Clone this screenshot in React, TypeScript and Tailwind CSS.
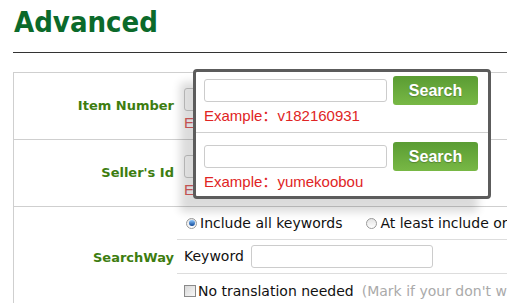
import type { ReactNode } from 'react';

const tahoma = { fontFamily: '"DejaVu Sans", Verdana, sans-serif' };
const arial = { fontFamily: '"Liberation Sans", "Noto Sans CJK SC", Arial, sans-serif' };

const SearchButton = () => (
  <button
    className="h-[29px] w-[85px] shrink-0 rounded-[3px] bg-gradient-to-b from-[#5a9c33] to-[#78b845] text-[16px] font-bold text-white [text-shadow:0_1px_1px_rgba(0,0,0,0.25)]"
    style={arial}
  >
    Search
  </button>
);

const Field = ({ width }: { width: string }) => (
  <div className={`h-[23px] shrink-0 ${width} rounded-[3px] border border-[#cccccc] bg-white`} />
);

const SearchBlock = ({ example, top }: { example: string; top: string }) => (
  <div className={`flex flex-col pl-[8px] ${top}`}>
    <div className="flex items-center gap-[6px]">
      <Field width="w-[183px]" />
      <SearchButton />
    </div>
    <div className="mt-[1px] text-[15px] leading-[20px] text-[#e02424]" style={arial}>
      Example：{example}
    </div>
  </div>
);

const Radio = ({ checked }: { checked?: boolean }) => (
  <span className="mr-[3px] inline-flex h-[11px] w-[11px] shrink-0 items-center justify-center rounded-full border border-[#9a9a9a] bg-gradient-to-b from-[#e4e4e4] to-[#ffffff]">
    {checked && <span className="h-[6px] w-[6px] rounded-full bg-gradient-to-b from-[#8cc8ff] to-[#0a4596]" />}
  </span>
);

const Row = ({ label, children, className }: { label: string; children: ReactNode; className?: string }) => (
  <div className={`grid grid-cols-[163px_1fr] border-b border-[#cfcfcf] ${className ?? ''}`}>
    <div className="flex items-center justify-end pr-[3px] text-[13px] font-bold text-[#3d7d10]" style={tahoma}>
      {label}
    </div>
    <div className="min-w-0 overflow-hidden">{children}</div>
  </div>
);

// the edge of the row's own field that peeks out from under the popup
const Peek = () => (
  <div className="w-[17px] overflow-hidden pl-[7px] pt-[15px]">
    <div className="h-[23px] w-[183px] rounded-[3px] border border-[#cccccc]" />
    <div className="mt-[2px] text-[15px] leading-[20px] text-[#e06060]" style={arial}>
      E
    </div>
  </div>
);

export default function App() {
  return (
    <div className="relative h-[303px] w-[507px] overflow-hidden bg-white">
      <div className="pl-[13px]">
        <h1
          className="pl-[1px] pt-[5px] text-[29px] font-bold leading-[34px] text-[#0b6a2b] [font-stretch:condensed]"
          style={tahoma}
        >
          Advanced
        </h1>
        <div className="mt-[13px] border-t border-[#333333]" />

        <div className="mt-[19px] border-l border-t border-[#cfcfcf]">
          <Row label="Item Number" className="h-[67px]">
            <Peek />
          </Row>
          <Row label="Seller's Id" className="h-[67px]">
            <Peek />
          </Row>
          <Row label="SearchWay" className="border-b-0">
            <div className="whitespace-nowrap text-[14px] text-[#111111]" style={tahoma}>
              <div className="flex h-[33px] items-center border-b border-[#dddddd] pl-[9px]">
                <Radio checked />
                <span>Include all keywords</span>
                <span className="ml-[24px]" />
                <Radio />
                <span>At least include or</span>
              </div>
              <div className="flex h-[34px] items-center border-b border-[#dddddd] pl-[7px]">
                <span>Keyword</span>
                <div className="ml-[7px] h-[23px] w-[182px] shrink-0 rounded-[3px] border border-[#cccccc]" />
              </div>
              <div className="flex h-[34px] items-center pl-[7px]">
                <span className="mr-[2px] inline-block h-[12px] w-[12px] shrink-0 border border-[#8a8a8a] bg-gradient-to-br from-[#d8d8d8] to-[#f8f8f8]" />
                <span>No translation needed</span>
                <span className="ml-[8px] text-[#aaaaaa]">(Mark if your don't w</span>
              </div>
            </div>
          </Row>
        </div>
      </div>

      {/* popup over the first two rows */}
      <div className="absolute left-[193px] top-[69px] h-[130px] w-[298px] rounded-[4px] border-[3px] border-[#5c5c5c] bg-white shadow-[-13px_13px_9px_rgba(0,0,0,0.14)]">
        <div className="h-[61px] border-b border-[#cfcfcf]">
          <SearchBlock example="v182160931" top="pt-[4px]" />
        </div>
        <SearchBlock example="yumekoobou" top="pt-[9px]" />
      </div>
    </div>
  );
}
